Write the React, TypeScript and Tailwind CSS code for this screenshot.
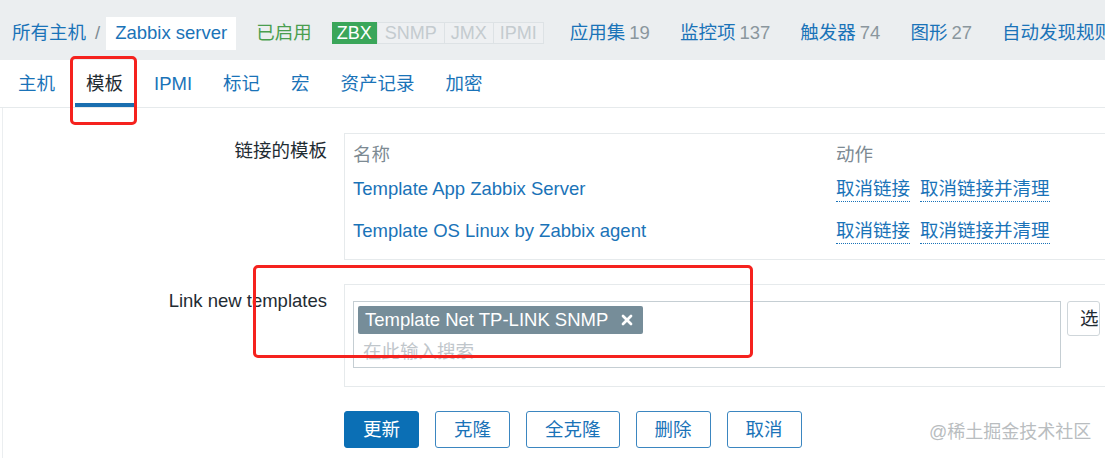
import { X } from 'lucide-react'

const navItems = [
  { label: '应用集', count: 19 },
  { label: '监控项', count: 137 },
  { label: '触发器', count: 74 },
  { label: '图形', count: 27 },
  { label: '自动发现规则', count: null },
]

const tabs = ['主机', '模板', 'IPMI', '标记', '宏', '资产记录', '加密']

const linked = ['Template App Zabbix Server', 'Template OS Linux by Zabbix agent']

const buttons = [
  { label: '更新', primary: true },
  { label: '克隆' },
  { label: '全克隆' },
  { label: '删除' },
  { label: '取消' },
]

export default function App() {
  return (
    <div className="relative w-[1105px] h-[458px] overflow-hidden bg-white text-[18.5px] leading-[22px] text-[#1f2c33] font-['Liberation_Sans','Noto_Sans_CJK_SC',sans-serif]">
      {/* top bar: breadcrumb + host status + counters */}
      <div className="h-[60px] bg-[#ebeef0] flex items-center pl-3 pt-[6px] whitespace-nowrap">
        <span className="text-[#1a73b8]">所有主机</span>
        <span className="text-[#7d8a93] ml-[9px] mr-[6px]">/</span>
        <span className="bg-white h-[33px] px-[9px] flex items-center text-[#1a73b8]">Zabbix server</span>
        <span className="ml-[20px] text-[#4a9e4f]">已启用</span>
        <div className="ml-[20px] flex h-[22px] text-[18px] leading-[20px]">
          <span className="bg-[#3aa65a] text-white px-[4px] border border-[#3aa65a]">ZBX</span>
          <span className="bg-[#eef0f2] text-[#c4cbcf] px-[7px] border border-[#dde2e5]">SNMP</span>
          <span className="bg-[#eef0f2] text-[#c4cbcf] px-[6px] border-y border-r border-[#dde2e5]">JMX</span>
          <span className="bg-[#eef0f2] text-[#c4cbcf] px-[6px] border-y border-r border-[#dde2e5]">IPMI</span>
        </div>
        <div className="ml-[26px] flex gap-[30px]">
          {navItems.map(n => (
            <span key={n.label}>
              <span className="text-[#1a73b8]">{n.label}</span>
              {n.count !== null && <span className="text-[#8a969d] ml-[4px]">{n.count}</span>}
            </span>
          ))}
        </div>
      </div>

      {/* tabs */}
      <div className="h-[48px] border-b border-[#e6eaec] flex items-stretch pl-[7px] gap-[9px]">
        {tabs.map(t => (
          <div
            key={t}
            className={
              t === '模板'
                ? 'px-[11px] flex items-center border-b-[4px] border-[#1a6fb0] pt-[4px] text-[#1f2c33]'
                : 'px-[11px] flex items-center text-[#1a73b8]'
            }
          >
            {t}
          </div>
        ))}
      </div>

      {/* form */}
      <div className="ml-[2px] border-l border-[#ebeef0] h-full pt-[25px]">
        <div className="grid grid-cols-[324px_auto] gap-x-[17px] gap-y-[24px] items-start">
          <div className="text-right pt-[7px]">链接的模板</div>
          <div className="w-[800px] border border-[#e6eaec] pt-[8px] pb-[7px] pl-[8px]">
            <div className="flex h-[26px] items-center text-[#7d8a93]">
              <span className="w-[483px]">名称</span>
              <span>动作</span>
            </div>
            {linked.map(l => (
              <div key={l} className="flex h-[42px] items-center">
                <span className="w-[483px] text-[#1a73b8]">{l}</span>
                <span className="flex gap-[10px] text-[#1a73b8]">
                  <span className="border-b border-dotted border-[#1a73b8] leading-[24px]">取消链接</span>
                  <span className="border-b border-dotted border-[#1a73b8] leading-[24px]">取消链接并清理</span>
                </span>
              </div>
            ))}
          </div>

          <div className="text-right pt-[6px]">Link new templates</div>
          <div className="w-[800px] border border-[#e6eaec] pt-[16px] pb-[18px] pl-[8px] flex gap-[6px] items-start">
            <div className="w-[708px] h-[67px] border border-[#c5ced3] px-[4px] pt-[4px]">
              <span className="inline-flex items-center h-[28px] bg-[#768d99] text-white rounded-[2px] pl-[7px] pr-[8px] gap-[11px]">
                Template Net TP-LINK SNMP
                <X size={16} strokeWidth={4} />
              </span>
              <div className="text-[#bfc6cb] pl-[5px] pt-[7px]">在此输入搜索</div>
            </div>
            <div className="h-[35px] border border-[#cfd6da] rounded-[3px] pl-[12px] flex items-center bg-white">选</div>
          </div>

          <div />
          <div className="flex gap-[16px]">
            {buttons.map(b => (
              <div
                key={b.label}
                className={
                  b.primary
                    ? 'h-[37px] px-[18px] flex items-center rounded-[3px] bg-[#0b6fb5] border border-[#0b6fb5] text-white'
                    : 'h-[37px] px-[18px] flex items-center rounded-[3px] bg-white border border-[#3b86c0] text-[#1a73b8]'
                }
              >
                {b.label}
              </div>
            ))}
          </div>
        </div>
      </div>

      {/* annotation marks */}
      <div className="absolute left-[70px] top-[56px] w-[67px] h-[69px] border-[3px] border-[#f5221e] rounded-[5px]" />
      <div className="absolute left-[253px] top-[265px] w-[500px] h-[93px] border-[3px] border-[#f5221e] rounded-[5px]" />

      {/* watermark */}
      <div className="absolute left-[929px] top-[421px] text-[18px] text-[#b9bdc0] whitespace-nowrap">@稀土掘金技术社区</div>
    </div>
  )
}
